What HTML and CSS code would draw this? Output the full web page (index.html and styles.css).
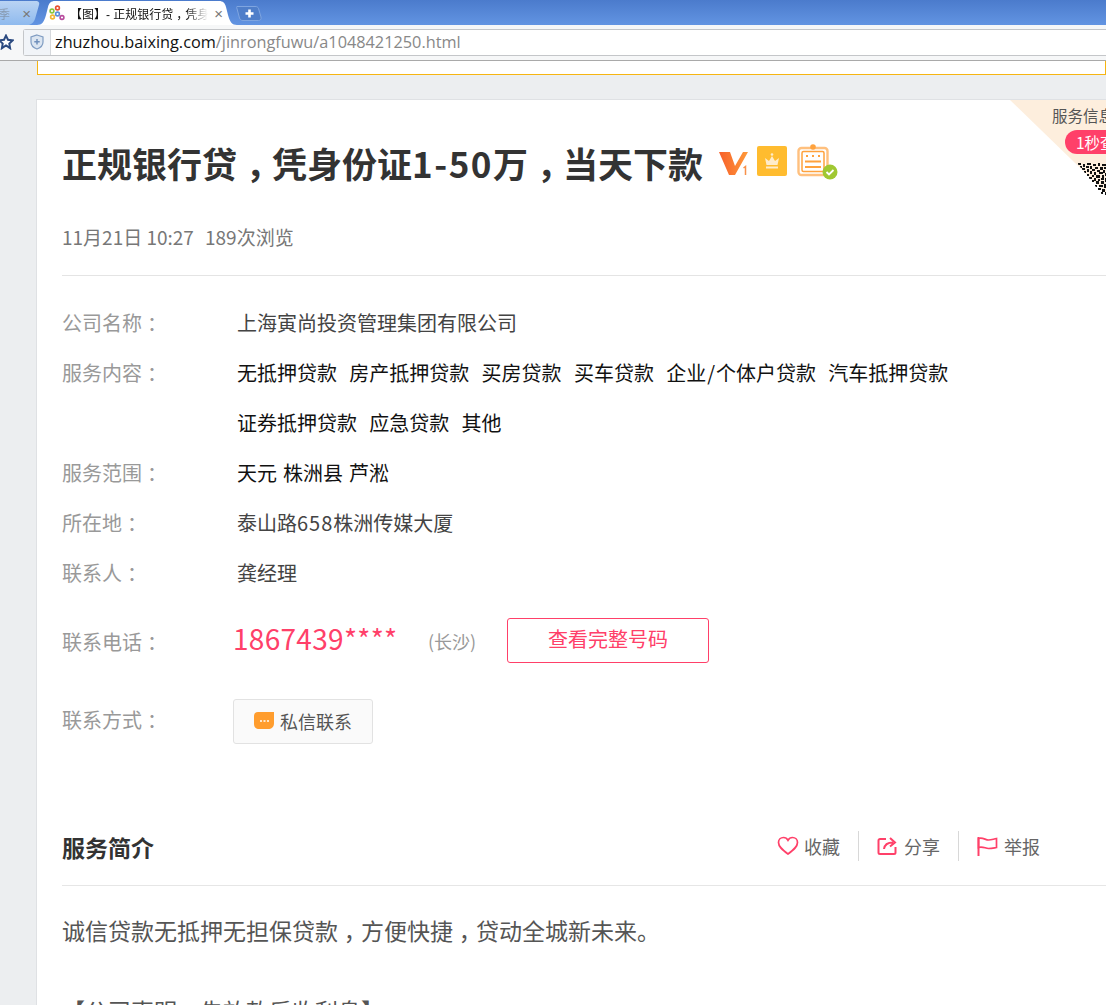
FILE: index.html
```html
<!DOCTYPE html>
<html lang="zh-CN">
<head>
<meta charset="utf-8">
<title>正规银行贷</title>
<link rel="stylesheet" href="styles.css">
</head>
<body>
<header class="chrome">
  <div class="tabbar">
    <div class="tab tab-off"><span class="tab-fade">理季</span><span class="tab-x">×</span></div>
    <div class="tab tab-on">
      <svg class="favicon" viewBox="0 0 16 16" width="16" height="16"><g fill="none" stroke-width="1.6"><circle cx="3" cy="6" r="1.9" stroke="#8cc63f"/><circle cx="3.5" cy="12" r="1.9" stroke="#f2b632"/><circle cx="8.5" cy="3" r="1.9" stroke="#e8502f"/><circle cx="8.5" cy="9" r="1.9" stroke="#5b8fd6"/><circle cx="13" cy="12.5" r="1.9" stroke="#b84c9e"/></g></svg>
      <span class="tab-title">【图】- 正规银行贷<span class="p">，</span>凭身</span><span class="tab-x">×</span>
    </div>
    <svg class="tab-new" viewBox="0 0 26 17" width="26" height="17"><path d="M1 1.500h18c2 0 3 .5 3.500 2L25 12c.5 2-.5 3.500-2.500 3.500H7c-2 0-3-1-3.500-2.500L.8 3c-.3-1 0-1.500.2-1.500z" fill="#4f7ec9" stroke="#7fa5e0"/><path d="M13.500 4.500v8M9.500 8.500h8" stroke="#fff" stroke-width="2.600"/></svg>
  </div>
  <div class="urlbar">
    <svg class="star" viewBox="0 0 16 16" width="16" height="16"><path d="M8 1.600l2 4.200 4.600.6-3.300 3.200.8 4.600L8 11.400l-4.100 2.800.8-4.600L1.400 6.400l4.600-.6z" fill="#fff" stroke="#2b4a80" stroke-width="2"/></svg>
    <div class="omnibox">
      <div class="shield-box"><svg viewBox="0 0 14 16" width="14" height="16"><path d="M7 1l6 2v5c0 3.500-2.500 5.800-6 7-3.500-1.200-6-3.500-6-7V3z" fill="#dbe5f1" stroke="#7f9cc2" stroke-width="1.200"/><path d="M7 5v5.500M4.300 7.800h5.400" stroke="#6f8fbb" stroke-width="1.500"/></svg></div>
      <span class="url"><span class="host">zhuzhou.baixing.com</span>/jinrongfuwu/a1048421250.html</span>
    </div>
  </div>
</header>

<main class="page">
  <div class="notice"></div>

  <article class="card">
    <aside class="promo">
      <div class="promo-tri"></div>
      <div class="promo-text">服务信息</div>
      <div class="promo-pill">1秒查看</div>
      <svg class="promo-qr" viewBox="0 0 30 38" width="30" height="38" shape-rendering="crispEdges"><path fill="#111" d="M1 0h3v2H1zM6 1h2v3H6zM10 0h4v2h-4zM16 1h3v2h-3zM21 0h2v3h-2zM25 1h4v2h-4zM3 3h2v2H3zM9 3h3v2H9zM13 3h2v3h-2zM18 4h3v2h-3zM23 4h3v3h-3zM27 4h3v2h-3zM5 5h3v2H5zM10 6h2v3h-2zM15 6h3v2h-3zM20 7h3v2h-3zM26 7h2v3h-2zM7 8h2v2H7zM13 8h2v3h-2zM17 9h2v3h-2zM22 9h4v2h-4zM28 10h2v3h-2zM10 11h2v2h-2zM15 12h2v2h-2zM19 12h4v3h-4zM25 12h2v3h-2zM12 14h3v2h-3zM17 15h2v3h-2zM21 16h2v2h-2zM24 15h3v2h-3zM28 15h2v4h-2zM15 17h2v2h-2zM19 18h3v3h-3zM24 18h3v3h-3zM18 22h2v2h-2zM22 22h4v2h-4zM27 21h3v4h-3zM21 25h3v2h-3zM25 26h3v3h-3zM24 29h2v2h-2zM28 29h2v3h-2z"/></svg>
    </aside>

    <div class="title-row">
      <h1 class="title">正规银行贷<span class="p">，</span>凭身份证<span class="num">1-50</span>万<span class="p">，</span>当天下款</h1>
      <svg class="badge-v" viewBox="0 0 30 26" width="30" height="26"><defs><linearGradient id="vg" x1="0" y1="0" x2="1" y2="0"><stop offset="0" stop-color="#f7602a"/><stop offset="1" stop-color="#fe9a3a"/></linearGradient></defs><path d="M0 2h11l5 14L24 2h5L16 25h-6z" fill="url(#vg)"/><path d="M24.500 18l2-1.500V25" fill="none" stroke="#f8914a" stroke-width="1.500"/></svg>
      <svg class="badge-crown" viewBox="0 0 30 30" width="30" height="30"><rect width="30" height="30" rx="2" fill="#ffbc2f"/><path d="M8 12l4 3 3-5 3 5 4-3-1.500 7h-11z" fill="#ffeccb"/><circle cx="15" cy="8.500" r="1.300" fill="#ffeccb"/><rect x="9" y="20.500" width="12" height="2" fill="#ffeccb"/></svg>
      <svg class="badge-cert" viewBox="0 0 42 36" width="42" height="36"><rect x="1.500" y="4" width="29" height="27" rx="3" fill="#fff" stroke="#ffc07e" stroke-width="2.400"/><rect x="5" y="7.500" width="22" height="20" rx="1.500" fill="none" stroke="#ffa23d" stroke-width="1.500"/><circle cx="16" cy="3" r="2.800" fill="#ffa23d"/><path d="M9 12h2M15 12h2M21 12h2" stroke="#ffa23d" stroke-width="2"/><path d="M8 17.500h16M8 23h16" stroke="#ffa23d" stroke-width="1.800"/><circle cx="33" cy="28" r="7.500" fill="#a0c832"/><path d="M29.500 28l2.500 2.500 4.500-4.500" fill="none" stroke="#fff" stroke-width="1.800"/></svg>
    </div>

    <p class="meta"><span class="meta-date">11月21日 10:27</span><span>189次浏览</span></p>

    <dl class="facts">
      <div class="fact"><dt>公司名称<span class="p">：</span></dt><dd class="soft">上海寅尚投资管理集团有限公司</dd></div>
      <div class="fact"><dt>服务内容<span class="p">：</span></dt><dd class="tags"><span>无抵押贷款</span><span>房产抵押贷款</span><span>买房贷款</span><span>买车贷款</span><span>企业<span class="slash">/</span>个体户贷款</span><span>汽车抵押贷款</span><span>证券抵押贷款</span><span>应急贷款</span><span>其他</span></dd></div>
      <div class="fact"><dt>服务范围<span class="p">：</span></dt><dd class="areas">天元 株洲县 芦淞</dd></div>
      <div class="fact"><dt>所在地<span class="p">：</span></dt><dd class="soft">泰山路<span class="num-sm">658</span>株洲传媒大厦</dd></div>
      <div class="fact"><dt>联系人<span class="p">：</span></dt><dd class="soft">龚经理</dd></div>
      <div class="fact fact-phone"><dt>联系电话<span class="p">：</span></dt><dd class="phone-cell"><span class="phone">1867439****</span><span class="city">(长沙)</span><a class="btn-full">查看完整号码</a></dd></div>
      <div class="fact fact-msg"><dt>联系方式<span class="p">：</span></dt><dd class="msg-cell"><a class="btn-msg"><svg viewBox="0 0 20 18" width="20" height="18"><path d="M4 0h16v11c0 4-2.500 6-6 6H5c-3 0-5-2-5-5V4c0-2.500 1.500-4 4-4z" fill="#ff9d2e"/><path d="M6 9h2M9.500 9h2M13 9h2" stroke="#fff" stroke-width="1.600"/></svg>私信联系</a></dd></div>
    </dl>

    <section class="intro">
      <div class="intro-head">
        <h2>服务简介</h2>
        <ul class="actions">
          <li><svg viewBox="0 0 22 20" width="22" height="20"><path d="M11 18C5 13.500 1.500 10.500 1.500 6.500 1.500 3.500 3.800 1.500 6.500 1.500c2 0 3.500 1 4.500 2.800 1-1.800 2.500-2.800 4.500-2.800 2.700 0 5 2 5 5 0 4-3.500 7-9.500 11.500z" fill="none" stroke="#ff4069" stroke-width="1.700"/></svg>收藏</li>
          <li><svg viewBox="0 0 22 20" width="22" height="20"><path d="M9 3H3a1.500 1.500 0 0 0-1.500 1.500v12A1.500 1.500 0 0 0 3 18h14a1.500 1.500 0 0 0 1.500-1.500V11" fill="none" stroke="#ff4069" stroke-width="2"/><path d="M7 13c.5-4 3.500-6.500 9-6.500M13 2l5 4.500-5 4" fill="none" stroke="#ff4069" stroke-width="2"/></svg>分享</li>
          <li><svg viewBox="0 0 22 20" width="22" height="20"><path d="M1.500 1v19" stroke="#ff4069" stroke-width="2"/><path d="M1.500 2.500c4-1.500 7 1.500 10 1.500 3 0 5-1 8-1.500v9c-3 .5-5 1-8 1-3 0-6-2.500-10-1z" fill="none" stroke="#ff4069" stroke-width="1.700"/></svg>举报</li>
        </ul>
      </div>
      <p class="intro-text">诚信贷款无抵押无担保贷款<span class="p">，</span>方便快捷<span class="p">，</span>贷动全城新未来。</p>
      <p class="intro-text intro-more">【公司声明<span class="p">，</span>先放款后收利息】</p>
    </section>
  </article>
</main>
</body>
</html>
```

FILE: styles.css
```css
* { box-sizing: border-box; }
html, body { margin: 0; height: 100%; overflow: hidden; }
body { width: 1106px; height: 1005px; background: #eceef0; font-family: "Noto Sans CJK SC", "Open Sans", sans-serif; color: #333; }
.p { font-feature-settings: "halt"; padding: 0 .25em; }

.chrome { height: 61px; border-bottom: 1px solid #a9a9a9; background: #f6f7f8; }
.tabbar { height: 25px; display: flex; align-items: flex-end; background: linear-gradient(#4b7bcc, #6294e2); }
.tab { height: 24px; display: flex; align-items: center; font-size: 12px; font-family: "Liberation Sans", "Noto Sans CJK SC", sans-serif; }
.tab-off { flex: none; width: 42px; justify-content: space-between; padding: 0 11px 0 0; color: #666; background: linear-gradient(#b9d3f3, #8fbaee); clip-path: path("M0 0H36C38 0 40 1 39 4L35 18C34 21 32 23 29 24H0Z"); }
.tab-fade { opacity: .45; white-space: nowrap; width: 10px; overflow: hidden; direction: rtl; }
.tab-on { flex: none; width: 200px; margin-left: -5px; padding: 0 14px 0 12px; background: #fff; color: #111; clip-path: path("M0 24C5 24 7 21 9 14L11 6C12 2 14 0 18 0H182C186 0 188 2 189 6L191 14C193 21 195 24 200 24Z"); }
.favicon { flex: none; margin-right: 5px; }
.tab-title { flex: 1; white-space: nowrap; overflow: hidden; width: 0; -webkit-mask-image: linear-gradient(90deg, #000 85%, transparent); mask-image: linear-gradient(90deg, #000 85%, transparent); }
.tab-x { color: #777; font-size: 15px; line-height: 1; margin-left: 6px; }
.tab-new { flex: none; margin: 0 0 3px -1px; }
.urlbar { height: 35px; display: flex; align-items: center; gap: 9px; padding: 0 0 1px 0; margin-left: -2px; }
.star { flex: none; }
.omnibox { flex: 1; height: 27px; display: flex; align-items: center; background: #fff; border: 1px solid #c4c6c9; border-right: 0; border-radius: 3px 0 0 3px; }
.shield-box { width: 27px; height: 25px; display: flex; align-items: center; justify-content: center; background: #f1f4f8; border-right: 1px solid #d5d8dc; }
.url { margin-left: 4px; font: 16.3px/25px "Open Sans", "Liberation Sans", sans-serif; color: #888; white-space: nowrap; }
.host { color: #111; }

.page { padding-left: 37px; }
.notice { height: 14px; background: #fff; border: 1px solid #f6b512; border-top: 0; }
.card { position: relative; margin: 24px 0 0 -1px; height: 960px; background: #fff; border: 1px solid #dfe1e4; border-right: 0; padding: 0 0 0 25px; overflow: hidden; }

.promo { position: absolute; top: 0; right: 0; width: 96px; height: 102px; overflow: hidden; }
.promo-tri { position: absolute; top: 0; right: 0; width: 0; height: 0; border-top: 93px solid #fdeedd; border-left: 96px solid transparent; }
.promo-text { position: absolute; top: 4px; left: 42px; width: 80px; font-size: 15.5px; line-height: 22px; color: #555; white-space: nowrap; }
.promo-pill { position: absolute; top: 30px; left: 55px; width: 70px; height: 24px; padding-left: 11px; border-radius: 12px; background: #ff4069; color: #fff; font-size: 15.5px; line-height: 24px; white-space: nowrap; }
.promo-qr { position: absolute; top: 63px; left: 67px; clip-path: polygon(0 0, 100% 0, 100% 100%); }

.title-row { display: flex; align-items: center; height: 36px; margin-top: 45px; }
.title { margin: 0; font-size: 35px; line-height: 36px; font-weight: 700; color: #333; white-space: nowrap; }
.num { letter-spacing: 1.5px; }
.badge-v { margin-left: 16px; }
.badge-crown { margin-left: 8px; margin-top: -4px; }
.badge-cert { margin-left: 10px; margin-top: -2px; }

.meta { margin: 42px 0 0; padding-bottom: 24px; height: 53px; border-bottom: 1px solid #e4e4e4; display: flex; gap: 10px; font-size: 19px; line-height: 28px; color: #777; }
.meta-date { width: 133px; white-space: nowrap; }

.facts { margin: 22px 0 0; }
.fact { display: flex; min-height: 50px; margin: 0; font-size: 20px; line-height: 50px; }
.fact dt { flex: none; width: 175px; color: #999; }
.fact dd { margin: 0; flex: 1; color: #111; }
.fact dd.soft { color: #444; }
.fact dd.areas { word-spacing: 1.500px; }
.tags { display: flex; flex-wrap: wrap; column-gap: 12.300px; max-width: 740px; }
.slash { padding: 0 1px; }
.num-sm { letter-spacing: 1px; }

.fact-phone { height: 70px; align-items: center; margin-top: 7px; line-height: 1; }
.fact-phone dt { margin-top: 4px; }
.phone-cell { display: flex; align-items: center; margin-left: -4px !important; }
.phone { font-size: 28px; letter-spacing: .3px; color: #ff4069; width: 195px; margin-bottom: 4px; }
.city { font-size: 18px; color: #999; width: 79px; padding-top: 2px; }
.btn-full { display: flex; align-items: center; justify-content: center; width: 202px; height: 45px; padding-bottom: 2px; border: 1px solid #ff4069; border-radius: 3px; color: #ff4069; font-size: 20px; }

.fact-msg { height: 74px; align-items: center; line-height: 1; margin-top: 9px; }
.fact-msg dt { margin-bottom: 2px; }
.msg-cell { margin-left: -4px !important; }
.btn-msg { display: inline-flex; align-items: center; gap: 6px; width: 140px; height: 45px; padding-left: 20px; background: #fafafa; border: 1px solid #e2e2e2; border-radius: 3px; color: #555; font-size: 18px; }

.intro { margin-top: 61px; }
.intro-head { display: flex; justify-content: space-between; align-items: center; height: 67px; padding: 0 66px 11px 0; border-bottom: 1px solid #e6e6e6; }
.intro-head h2 { margin: 0; font-size: 23px; line-height: 32px; font-weight: 700; color: #333; }
.actions { list-style: none; margin: 0 0 2px; padding: 0; display: flex; }
.actions li { display: flex; align-items: center; gap: 5px; height: 30px; padding: 0 18px; font-size: 18px; color: #666; border-left: 1px solid #d8d8d8; }
.actions li:first-child { border-left: 0; }
.actions li:last-child { padding-right: 0; }

.intro-text { margin: 24px 0 0; font-size: 23px; line-height: 40px; color: #555; }
.intro-more { margin-top: 40px; }
```
